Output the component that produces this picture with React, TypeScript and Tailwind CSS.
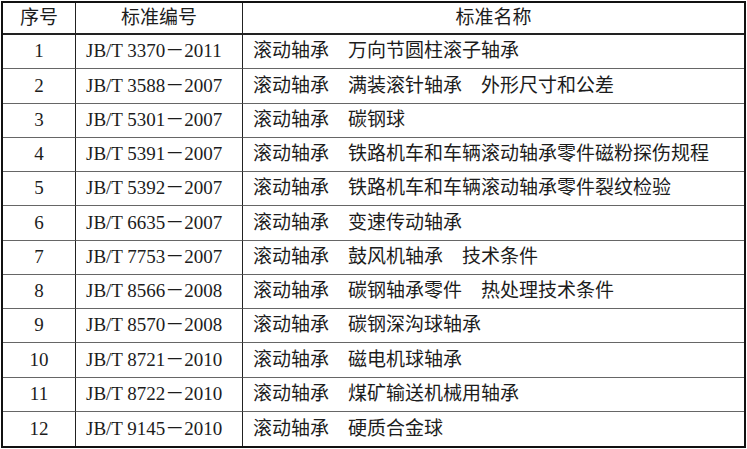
const rows = [
  ['1', 'JB/T 3370－2011', '滚动轴承　万向节圆柱滚子轴承'],
  ['2', 'JB/T 3588－2007', '滚动轴承　满装滚针轴承　外形尺寸和公差'],
  ['3', 'JB/T 5301－2007', '滚动轴承　碳钢球'],
  ['4', 'JB/T 5391－2007', '滚动轴承　铁路机车和车辆滚动轴承零件磁粉探伤规程'],
  ['5', 'JB/T 5392－2007', '滚动轴承　铁路机车和车辆滚动轴承零件裂纹检验'],
  ['6', 'JB/T 6635－2007', '滚动轴承　变速传动轴承'],
  ['7', 'JB/T 7753－2007', '滚动轴承　鼓风机轴承　技术条件'],
  ['8', 'JB/T 8566－2008', '滚动轴承　碳钢轴承零件　热处理技术条件'],
  ['9', 'JB/T 8570－2008', '滚动轴承　碳钢深沟球轴承'],
  ['10', 'JB/T 8721－2010', '滚动轴承　磁电机球轴承'],
  ['11', 'JB/T 8722－2010', '滚动轴承　煤矿输送机械用轴承'],
  ['12', 'JB/T 9145－2010', '滚动轴承　硬质合金球'],
]

export default function App() {
  return (
    <div className="w-[747px] h-[449px] bg-white pt-px pl-px">
      <div
        className="w-[745px] h-[447px] border-2 border-[#111] grid grid-cols-[73px_167px_1fr] grid-rows-[32px_repeat(12,1fr)] text-[19px] text-[#1c1c1c]"
        style={{ fontFamily: '"Liberation Serif", "Noto Sans CJK SC", serif' }}
      >
        {/* header */}
        <div className="flex items-center justify-center border-r border-b-2 border-[#222]">序号</div>
        <div className="flex items-center justify-center border-r border-b-2 border-[#222]">标准编号</div>
        <div className="flex items-center justify-center border-b-2 border-[#222]">标准名称</div>

        {rows.map((r, i) => {
          const last = i === rows.length - 1
          const line = last ? '' : 'border-b border-b-[#666]'
          return [
            <div key={`a${i}`} className={`flex items-center justify-center border-r border-r-[#222] ${line}`}>
              {r[0]}
            </div>,
            <div key={`b${i}`} className={`flex items-center pl-[10px] border-r border-r-[#222] whitespace-nowrap ${line}`}>
              {r[1]}
            </div>,
            <div key={`c${i}`} className={`flex items-center pl-[10px] whitespace-nowrap ${line}`}>
              {r[2]}
            </div>,
          ]
        })}
      </div>
    </div>
  )
}
